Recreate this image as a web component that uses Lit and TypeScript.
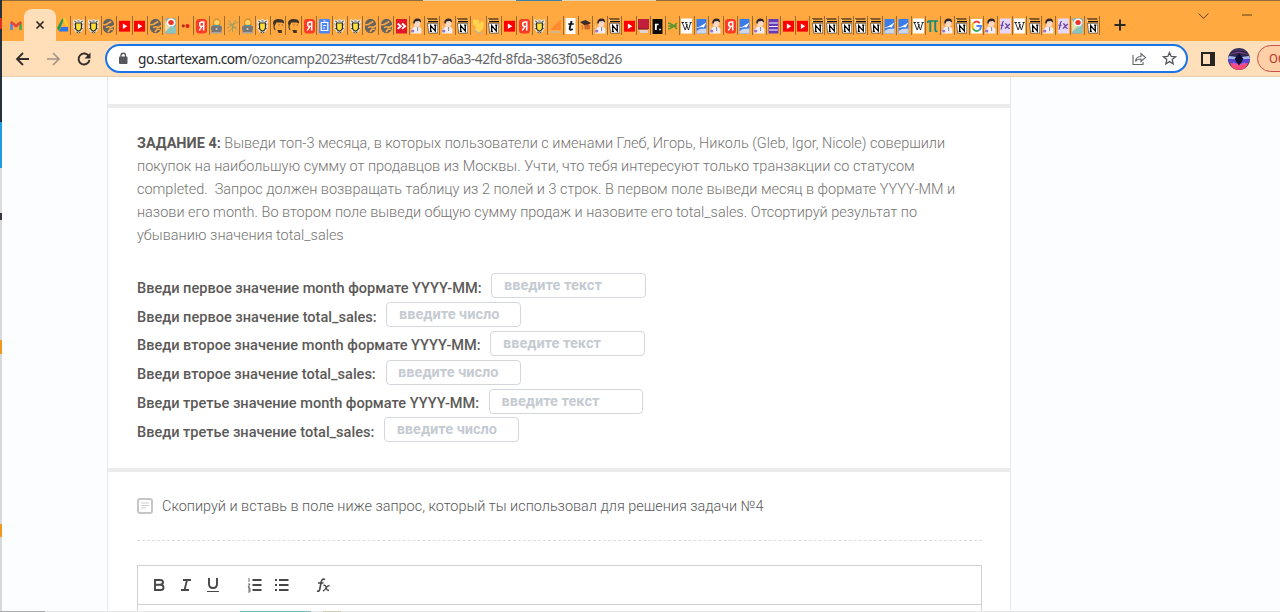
import { LitElement, html, css, svg } from "lit";
import { customElement, property } from "lit/decorators.js";

const icons: Record<string, any> = {
  drive: svg`<path d="M7 1h2L5.500 9 3 14 1 11z" fill="#1e9b56"/><path d="M7 1h3l4 8h-3.500z" fill="#ffc928"/><path d="M5.500 10H13v4.500H3z" fill="#2f75e8"/><path d="M6 10l1.500-3L9 10z" fill="#ffa940"/>`,
  shield: svg`<path d="M3.500 1l2 1.500L8 1l2.500 1.500 2-1.500.5 3-.5 7-2 3L8 15.500 5.500 14l-2-3L3 4z" fill="#eeeae2"/><path d="M4 3l2 1m4 0l2-1M3.500 6l1 1m7 0l1-1M4 11l1-1m6 0l1 1M6 14l2 1 2-1M7 3h2" stroke="#555" stroke-width=".9" fill="none"/><path d="M5.300 5h5.400v5q0 2-2.700 3.200Q5.300 12 5.300 10z" fill="#ffe135" stroke="#2c2a28" stroke-width="1.100"/>`,
  globe: svg`<ellipse cx="8" cy="8" rx="5.300" ry="7.300" fill="#666460"/><path d="M3 6.500q3 1 5-1.500l2.500-1.500" stroke="#ffa940" stroke-width="1.500" fill="none"/><path d="M6 10q1-2 3-1t4-1.500M7.500 14l2-3 2.500.5" stroke="#ffa940" stroke-width="1.500" fill="none"/>`,
  yt: svg`<rect x="3" y="2.800" width="10" height="10.800" fill="#f00"/><path d="M6.500 5.500l4 2.700-4 2.700z" fill="#fff"/>`,
  maps: svg`<rect x="3" y="0" width="10" height="16" rx="2" fill="#9daaa5"/><path d="M3 15l7-8 3 2v6z" fill="#8ac5bd"/><path d="M3 2l5 7-5 5z" fill="#e2e0aa"/><circle cx="8.500" cy="4.500" r="4" fill="#fff"/><circle cx="8.500" cy="4.500" r="2.500" fill="#ef3328"/>`,
  dots: svg`<circle cx="6" cy="8" r="1.400" fill="#ad2b13"/><circle cx="9.800" cy="8" r="1.900" fill="#e51d13"/>`,
  ya: svg`<rect x="3" y="1" width="10" height="14.500" rx="3" fill="#fa3b25"/><path d="M10 12.500V4H8.500Q6.300 4 6.300 6.200T8.500 8.400H10M8.300 8.500L6 12.500" fill="none" stroke="#fff" stroke-width="1.400"/>`,
  man: svg`<path d="M5 7V3l2-2.500h2.500L11.500 3v4z" fill="#d08c2e"/><circle cx="8.300" cy="4.500" r="2.500" fill="#ffd46b"/><path d="M3 9l2-2h6l2 2v3H3z" fill="#5b93a0"/><path d="M3.500 8h9v7h-9z" fill="#777"/><path d="M3 14h10v1.500H3z" fill="#a7a29b"/><circle cx="8" cy="11" r=".9" fill="#ccc"/>`,
  branch: svg`<path d="M4 2l4 5 3-5M4 6l4 1 5-3M3 10l5-3 4 5M8 7v7M4 14l4-4 4-1" stroke="#8b9f69" stroke-width=".8" fill="none"/>`,
  head: svg`<path d="M3 5.500Q3 1 8 1t5 3v1.500l-2-1H6L4.500 8z" fill="#3b332a"/><path d="M4 6v4l1 2" stroke="#3b332a" fill="none"/><path d="M7 12h4v3H8z" fill="#3e342a"/><path d="M8 7h1m2 0h1" stroke="#6e4e2b"/>`,
  clip: svg`<rect x="3" y="1" width="10" height="14.500" rx="1" fill="#4f86f5"/><path d="M5 4.500h6v8H5zM7 3h2" fill="none" stroke="#fff" stroke-width="1.100"/><path d="M6.500 7.500h3m-3 2.500h2" stroke="#fff" stroke-width=".9"/>`,
  red: svg`<rect x="3" y="1" width="10" height="14.500" fill="#df1729"/><path d="M4.500 5.500l2.800 2.700-2.800 2.700M8.500 5.500l2.800 2.700-2.800 2.700" stroke="#fff" stroke-width="1.800" fill="none"/>`,
  person: svg`<path d="M3 15.500l.5-4L6 8.500h4.500l2 2.500v4.500z" fill="#efedf4"/><path d="M5.500 3h6v4L9 9 6 8z" fill="#f8d8c6"/><path d="M5 5Q5 .5 9 .5q3.500 0 3 4l-2-1.500-3 .5L6 6z" fill="#33272c"/><path d="M9 9v4" stroke="#77717c" stroke-width=".8"/><path d="M3 7l1 3" stroke="#f4c5a4" stroke-width="1.200"/><circle cx="4.500" cy="13" r="1.500" fill="#9b73c9"/>`,
  notion: svg`<path d="M3 1h9.500M4 3.600h9" stroke="#111" stroke-width="1.200"/><path d="M3 1v3" stroke="#eee"/><path d="M3.500 5.300h9.300v9.800H4.500z" fill="#fff" stroke="#333" stroke-width=".6"/><path d="M6.300 13.500v-6l4.200 5.500v-6M5.500 13.300h2M9.500 7.200h2" stroke="#000" stroke-width="1.200" fill="none"/>`,
  yellow: svg`<path d="M3 1q4 2 5 0l1 5 2-3 2 2-1 6-4 4-3-3 1-3-3-3z" fill="#ffd44f"/><path d="M4 12l4 3h4" stroke="#b5b29a" fill="none"/>`,
  orange: svg`<path d="M4 11l5-6 4-3v10H5z" fill="#ff8a30"/><path d="M3 14h9" stroke="#c6b8a5" stroke-width="1.500"/>`,
  letter: svg`<rect x="3.500" y="0" width="9" height="16" fill="#fff"/><path d="M9 3L7.300 10q-.5 3 2.700 1M6 6h5" stroke="#111" stroke-width="1.700" fill="none"/>`,
  grad: svg`<path d="M3 4l5-2 5 3-5 3z" fill="#3a2c26"/><path d="M7.500 7h4v4h-4zM5 7v5" stroke="#d35b21" stroke-width=".7" fill="#c76b38"/>`,
  maroon: svg`<path d="M3 1h10v10H3z" fill="#bf1e3c"/><path d="M4 12h8v3H5z" fill="#ded4d4"/><path d="M3 11h9" stroke="#7d1831"/>`,
  black: svg`<rect x="3.500" y="1" width="9" height="15" fill="#0b0b0b"/><path d="M6.500 12V6.500H9M9.500 11.500H11" stroke="#fff" stroke-width="1.700" fill="none"/>`,
  green: svg`<path d="M4 5q4 1 8 6M4 11q4-1 8-6M4 8h8" stroke="#56962f" stroke-width="1.300" fill="none"/>`,
  wiki: svg`<rect x="3" y="0.500" width="10" height="15" fill="#fff"/><path d="M4.200 4.500L6.800 12l2-6M7.200 4.500L9.800 12l2-7.500M3.300 4.500h2.500m1 0h2m2 0h2" stroke="#222" stroke-width=".9" fill="none"/>`,
  blue: svg`<rect x="3.500" y="1" width="9" height="14.500" fill="#397cea"/><path d="M3.500 13l3-2 6-.5v5h-9z" fill="#c9d6ec"/><path d="M3.500 9.500l3-1 6-4-2.500 5-2-.5-4.500 1z" fill="#fff"/>`,
  purple: svg`<rect x="3.500" y="1" width="9" height="14.500" fill="#673ab7"/><path d="M4 5h8M4 8.500h8M4 12h8" stroke="#fff" stroke-width="1.100"/>`,
  pi: svg`<path d="M3.500 5q0-2 2-2H13M6 3v11M10.500 3v9q0 2 2 1" stroke="#118b7b" stroke-width="1.700" fill="none"/>`,
  google: svg`<rect x="3" y="1" width="10" height="14.500" fill="#fff"/><g fill="none" stroke-width="1.800"><path d="M11 5Q8 2 5.500 5" stroke="#e94235"/><path d="M5.200 4.800q-1.800 3.200 0 6.400" stroke="#fbbc05"/><path d="M5 11q3 4 5.500.8" stroke="#34a853"/><path d="M8 8h4q0 2.500-1.200 4" stroke="#4285f4"/></g>`,
  fx: svg`<rect x="3" y="0.500" width="10" height="15" fill="#e5d8f7"/><path d="M6.500 3.500Q5 3.500 5 7l-1 4.500M3.300 7.300h3M7.500 6q1.500-.5 2 2t2.500 2.500M12 6L7.500 10.500" stroke="#66409c" stroke-width="1.100" fill="none"/>`,
};

const wideTabs = "shield shield globe yt yt globe maps dots ya man branch man shield head head ya clip shield shield globe globe red person notion person notion yellow notion yt ya shield orange letter".split(" ");
const narrowTabs = "grad person notion yt maroon black green wiki blue person ya blue person purple yt yt notion notion notion notion notion blue blue wiki pi person notion google person fx wiki notion person fx maps notion".split(" ");

@customElement("browser-bar")
class BrowserBar extends LitElement {
  static styles = css`
    :host { display: block; font-family: Roboto, sans-serif; }
    .strip { height: 41px; box-sizing: border-box; border-top: 1px solid #976a38; background: #ffa940; display: flex; padding-top: 8px; }
    .lead { width: 23px; padding-left: 2px; box-sizing: border-box; }
    .gmail { display: block; margin: 11px 0 0 8px; }
    .active { width: 32px; height: 32px; border-radius: 8px 8px 0 0; background: #ffdfb9; display: grid; place-items: center; margin-left: 1px; }
    .drive { box-sizing: border-box; width: 15px; height: 19px; margin-top: 7px; display: flex; justify-content: center; border-right: 1px solid #9b6b35; }
    .tab { box-sizing: border-box; height: 19px; margin-top: 7px; border-right: 1px solid #9b6b35; display: grid; place-items: center; overflow: hidden; flex: none; }
    .wide { width: 15.400px; }
    .narrow { width: 14.480px; }
    .plus { margin: 10px 0 0 14.500px; }
    .caret { margin: 3px 0 0 72px; }
    .min { margin: 5px 0 0 33px; }
    .bar { height: 36px; box-sizing: border-box; border-bottom: 1px solid #ecd0ae; background: #ffdfb9; display: flex; align-items: center; overflow: hidden; padding-left: 14px; }
    .nav { width: 91px; display: flex; gap: 13px; flex: none; }
    .address { width: 1083px; height: 29px; box-sizing: border-box; border: 2px solid #1a73e8; border-radius: 15px; background: #fff; display: flex; align-items: center; padding: 0 9px 0 11px; flex: none; }
    .url { flex: 1; margin-left: 10px; color: #65676a; font: 13.700px/20px "Noto Sans", sans-serif; letter-spacing: -0.480px; white-space: pre; }
    .host { color: #27292c; }
    .share { margin-right: 15px; }
    .side { margin-left: 13px; flex: none; }
    .avatar { margin-left: 13px; flex: none; }
    .update { margin-left: 7px; width: 90px; flex: none; height: 25px; border: 1px solid #c95048; border-radius: 14px; background: #ffd0a8; color: #b93831; font-size: 13px; line-height: 25px; padding-left: 11px; }
  `;

  tab(name: string, size: string) {
    return html`<div class="tab ${size}"><svg width="11" height="16" viewBox="3 0 10 16" preserveAspectRatio="none">${icons[name]}</svg></div>`;
  }

  render() {
    return html`
      <div class="strip">
        <div class="lead"><svg class="gmail" width="12" height="11" viewBox="0 0 12 11"><path d="M1.500 10V2" stroke="#4385f4" stroke-width="2.400"/><path d="M10.500 10V2" stroke="#34a853" stroke-width="2.400"/><path d="M1 2l5 4 5-4" stroke="#ea4335" stroke-width="2.600" fill="none"/></svg></div>
        <div class="active"><svg width="10" height="10" viewBox="0 0 10 10"><path d="M1.500 1.500l7 7m0-7l-7 7" stroke="#302a24" stroke-width="1.700"/></svg></div>
        <div class="drive"><svg width="12" height="17" viewBox="1 -1 13 17" preserveAspectRatio="none">${icons.drive}</svg></div>
        ${wideTabs.map((n) => this.tab(n, "wide"))}${narrowTabs.map((n) => this.tab(n, "narrow"))}
        <svg class="plus" width="12" height="12" viewBox="0 0 12 12"><path d="M6 .5v11M.5 6h11" stroke="#2b2722" stroke-width="2"/></svg>
        <svg class="caret" width="11" height="8" viewBox="0 0 11 8"><path d="M.7 1.500l4.800 5 4.800-5" fill="none" stroke="#59401f"/></svg>
        <svg class="min" width="10" height="2" viewBox="0 0 10 2"><path d="M0 1h10" stroke="#59401f"/></svg>
      </div>
      <div class="bar">
        <div class="nav">
          <svg width="18" height="16" viewBox="0 0 18 16"><path d="M15 8H3.500M9 2L3 8l6 6" fill="none" stroke="#302d2b" stroke-width="1.800"/></svg>
          <svg width="18" height="16" viewBox="0 0 18 16"><path d="M2 8h11.500M8 2l6 6-6 6" fill="none" stroke="#a29588" stroke-width="1.600"/></svg>
          <svg width="16" height="16" viewBox="0 0 16 16"><path d="M13 5.500A5.500 5.500 0 1 0 13.500 9" fill="none" stroke="#302d2b" stroke-width="1.900"/><path d="M14.500 1.500v6h-6z" fill="#302d2b"/></svg>
        </div>
        <div class="address">
          <svg width="10" height="13" viewBox="0 0 10 13"><rect x="1" y="4.500" width="8.500" height="7.500" rx="1" fill="#55575a"/><path d="M3 5V3.500a2.200 2.200 0 0 1 4.500 0V5" fill="none" stroke="#55575a" stroke-width="1.300"/></svg>
          <div class="url"><span class="host">go.startexam.com</span>/ozoncamp2023#test/7cd841b7-a6a3-42fd-8fda-3863f05e8d26</div>
          <svg class="share" width="16" height="15" viewBox="0 0 16 15"><path d="M2 4v9.500h10V11M4.500 10.500q.5-5 5.500-5V2.500l4.500 4-4.500 4V8q-4-.2-5.500 2.500z" fill="none" stroke="#66696c" stroke-width="1.150"/></svg>
          <svg width="15" height="15" viewBox="0 0 15 15"><path d="M7.500 1.500l1.700 4 4.300.3-3.300 2.800 1 4.300-3.700-2.300-3.700 2.300 1-4.300-3.300-2.800 4.300-.3z" fill="none" stroke="#55585b" stroke-width="1.300"/></svg>
        </div>
        <svg class="side" width="14" height="14" viewBox="0 0 14 14"><rect x="1" y="1" width="12" height="12" fill="none" stroke="#272522" stroke-width="2"/><path d="M9 1h4v12H9z" fill="#272522"/></svg>
        <svg class="avatar" width="22" height="22" viewBox="0 0 22 22"><circle cx="11" cy="11" r="11" fill="#3a3560"/><path d="M4 4q7-4 14 0l1 3H3z" fill="#7c3f86"/><path d="M3 5q8-4 16 0M2 8q9-4 18 0" fill="none" stroke="#252744" stroke-width="1.400"/><path d="M1 8l7 1 1 3-9-1zM21 8l-7 1-1 3 9-1z" fill="#a9bcf0"/><path d="M0 11q4-1 8 1l1 5-7-1zM22 11q-4-1-8 1l-1 5 7-1z" fill="#5a45d0"/><path d="M2 15q9 1 18 0-2 7-9 7t-9-7z" fill="#ff4a74"/><path d="M5 15l4 2M17 15l-4 2" stroke="#c45be0" stroke-width="1.500"/><path d="M11 5l4.500 6-4.500 6.500L6.500 11z" fill="#0c1034"/></svg>
        <div class="update">Обновить</div>
      </div>`;
  }
}

@customElement("answer-row")
class AnswerRow extends LitElement {
  @property() label = "";
  @property() kind = "text";
  static styles = css`
    :host { display: flex; height: 28.850px; color: #5c5a58; font: 500 14.550px/22px Roboto, sans-serif; }
    .label { padding-top: 4.600px; white-space: nowrap; }
    .field { box-sizing: border-box; margin-left: 9.800px; height: 25px; border: 1px solid #d3d7dc; border-radius: 4px; background: #fff; color: #c6cbd2; font-weight: 700; padding: 0 11.600px; line-height: 23.700px; white-space: nowrap; }
    .text { width: 154.500px; }
    .number { width: 135px; }
  `;
  render() {
    return html`<div class="label">${this.label}</div><div class="field ${this.kind}">${this.kind === "text" ? "введите текст" : "введите число"}</div>`;
  }
}

@customElement("app-root")
class AppRoot extends LitElement {
  static styles = css`
    :host { display: block; width: 1280px; height: 612px; overflow: hidden; position: relative; background: #fcfdff; font-family: Roboto, sans-serif; }
    .page { display: flex; height: 535px; padding-left: 107px; }
    .card { width: 904px; box-sizing: border-box; background: #fff; border: solid #e7e9eb; border-width: 0 1px; }
    .rule { height: 4px; background: #ebebeb; }
    .first { height: 27px; }
    .task { height: 360px; box-sizing: border-box; padding: 24px 29px 0; color: #757371; font-weight: 300; font-size: 14.460px; line-height: 23.100px; }
    .line { white-space: pre; }
    .line b { color: #5c5a58; font-weight: 700; }
    .answers { margin-top: 25.700px; }
    .prompt { margin: 0 28px 0 29px; height: 69px; box-sizing: border-box; border-bottom: 1px dashed #dedede; display: flex; align-items: center; gap: 9px; font-weight: 300; font-size: 14.450px; color: #595959; }
    .editor { margin: 24px 28px 0 29px; height: 70px; border: 1px solid #d1d1d1; }
    .tools { height: 38px; border-bottom: 1px solid #d1d1d1; display: flex; align-items: center; padding-left: 13px; }
    .tools svg { flex: none; }
    .edge { position: absolute; left: 0; top: 0; width: 2px; height: 612px; background: linear-gradient(#26313b 0 18px, #db3026 18px 29px, #26313b 29px 122px, #209be2 122px 168px, #dcdcdc 168px 213px, #3b3342 213px 220px, #d8d8d8 220px 340px, #ee981d 340px 354px, #d8d8d8 354px 524px, #ee981d 524px 537px, #d8d8d8 537px); }
    .foot { position: absolute; left: 0; bottom: 0; width: 1280px; height: 1px; background: linear-gradient(90deg, #aaa 0 45px, #e4e6e7 45px 240px, #77bcb9 240px 311px, #e4e6e7 311px 323px, #cbcdb0 323px 341px, #e4e6e7 341px); }
    .top { position: absolute; left: 423px; top: 0; width: 233px; height: 1px; background: linear-gradient(90deg, #e9d5b5 0 93px, #3b82ae 93px 139px, #e9d5b5 139px); }
  `;
  render() {
    const lines = [
      "покупок на наибольшую сумму от продавцов из Москвы. Учти, что тебя интересуют только транзакции со статусом",
      "completed.  Запрос должен возвращать таблицу из 2 полей и 3 строк. В первом поле выведи месяц в формате YYYY-MM и",
      "назови его month. Во втором поле выведи общую сумму продаж и назовите его total_sales. Отсортируй результат по",
      "убыванию значения total_sales",
    ];
    return html`
      <browser-bar></browser-bar>
      <div class="page"><main class="card">
        <div class="first"></div><div class="rule"></div>
        <section class="task">
          <div class="line"><b>ЗАДАНИЕ 4:</b> Выведи топ-3 месяца, в которых пользователи с именами Глеб, Игорь, Николь (Gleb, Igor, Nicole) совершили</div>
          ${lines.map((l) => html`<div class="line">${l}</div>`)}
          <div class="answers">
            ${["первое", "второе", "третье"].map((n) => html`
              <answer-row label="Введи ${n} значение month формате YYYY-MM:" kind="text"></answer-row>
              <answer-row label="Введи ${n} значение total_sales:" kind="number"></answer-row>`)}
          </div>
        </section>
        <div class="rule"></div>
        <div class="prompt"><svg width="16" height="16" viewBox="0 0 16 16"><rect x="1" y="1" width="14" height="14" rx="2" fill="#fff" stroke="#c6c6c6" stroke-width="2"/><path d="M4 5h8M4 7.500h8M4 10h5" stroke="#cfcfcf" stroke-width="1.200"/></svg><span>Скопируй и вставь в поле ниже запрос, который ты использовал для решения задачи №4</span></div>
        <div class="editor"><div class="tools">
          <svg width="190" height="18" viewBox="0 0 190 18" fill="none" stroke="#474747" stroke-width="1.900">
            <path d="M4 4h5q3 0 3 2.300T9 8.800H4zm0 4.800h5.500q3 0 3 2.600T9.500 14H4z"/>
            <path d="M32 4h8M30 14h8M36 4l-2.500 10" stroke-width="1.800"/>
            <path d="M58 2v6q0 4 4 4t4-4V2"/><path d="M56 15.500h12" stroke-width="1"/>
            <path d="M101.500 4h9M101.500 9h9M101.500 14h9M128 4h9.500M128 9h9.500M128 14h9.500" stroke-width="2"/>
            <path d="M98 2v4M97 8h2l-2 3h2M97 12h2v4h-2m0-2h2" stroke-width=".8"/>
            <path d="M124 4h2M124 9h2M124 14h2"/>
            <g transform="translate(-3.500 0)"><path d="M177.500 3.500q-3-1.500-3.800 2.500l-1.400 7q-.5 3-2.800 2M170.500 7h5.500" stroke-width="1.600"/>
            <path d="M176 9.500q2-1 2.500 2t3 3M182 9.500q-2 0-3.500 2.500t-3 3" stroke-width="1.400"/></g>
          </svg>
        </div></div>
      </main></div>
      <div class="edge"></div><div class="foot"></div><div class="top"></div>`;
  }
}
